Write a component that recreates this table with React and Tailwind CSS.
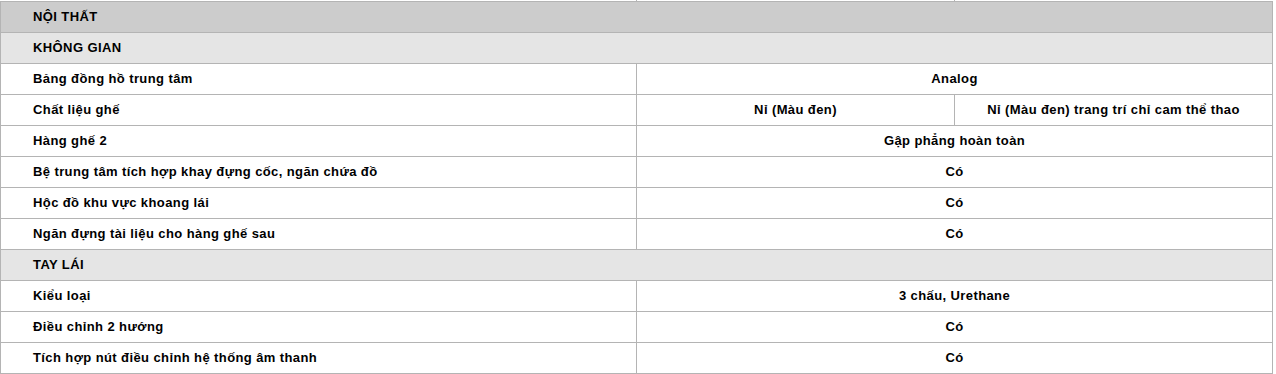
import React from "react";

const rows = [
  { type: "h1", label: "NỘI THẤT" },
  { type: "h2", label: "KHÔNG GIAN" },
  { label: "Bảng đồng hồ trung tâm", values: ["Analog"] },
  { label: "Chất liệu ghế", values: ["Nỉ (Màu đen)", "Nỉ (Màu đen) trang trí chỉ cam thể thao"] },
  { label: "Hàng ghế 2", values: ["Gập phẳng hoàn toàn"] },
  { label: "Bệ trung tâm tích hợp khay đựng cốc, ngăn chứa đồ", values: ["Có"] },
  { label: "Hộc đồ khu vực khoang lái", values: ["Có"] },
  { label: "Ngăn đựng tài liệu cho hàng ghế sau", values: ["Có"] },
  { type: "h2", label: "TAY LÁI" },
  { label: "Kiểu loại", values: ["3 chấu, Urethane"] },
  { label: "Điều chỉnh 2 hướng", values: ["Có"] },
  { label: "Tích hợp nút điều chỉnh hệ thống âm thanh", values: ["Có"] },
];

export default function App() {
  return (
    <div
      className="bg-white w-[1276px] h-[374px] overflow-hidden text-[13px] tracking-[0.4px] font-bold text-black"
      style={{ fontFamily: '"Liberation Sans", Arial, sans-serif' }}
    >
      <div className="flex h-px">
        <div className="w-[637px] border-r border-[#b4b4b4]" />
        <div className="w-[318px] border-r border-[#b4b4b4]" />
      </div>
      <div className="w-[1273px] border-l border-r border-t border-[#b4b4b4]">
        {rows.map((r, i) => {
          if (r.type === "h1" || r.type === "h2") {
            return (
              <div
                key={i}
                className={`h-[31px] border-b border-[#b4b4b4] flex items-center pl-[32px] ${
                  r.type === "h1" ? "bg-[#cccccc]" : "bg-[#e5e5e5]"
                }`}
              >
                {r.label}
              </div>
            );
          }
          return (
            <div key={i} className="h-[31px] border-b border-[#b4b4b4] flex">
              <div className="w-[636px] border-r border-[#b4b4b4] flex items-center pl-[32px]">
                {r.label}
              </div>
              {r.values.length === 1 ? (
                <div className="flex-1 flex items-center justify-center">{r.values[0]}</div>
              ) : (
                <>
                  <div className="w-[318px] border-r border-[#b4b4b4] flex items-center justify-center">
                    {r.values[0]}
                  </div>
                  <div className="flex-1 flex items-center justify-center">{r.values[1]}</div>
                </>
              )}
            </div>
          );
        })}
      </div>
    </div>
  );
}
